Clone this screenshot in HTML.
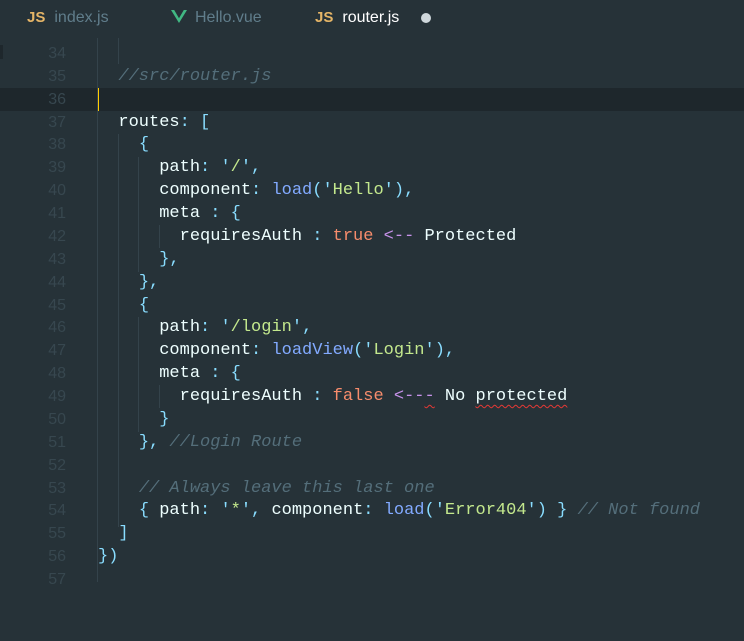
<!DOCTYPE html>
<html><head><meta charset="utf-8"><style>
html,body{margin:0;padding:0}
body{width:744px;height:641px;background:#263238;position:relative;overflow:hidden;font-family:"Liberation Mono",monospace;font-size:17px}
.tabs{position:absolute;left:0;top:0;width:744px;height:36px;background:#263238;font-family:"Liberation Sans",sans-serif;font-size:16px}
.tab{position:absolute;top:9px;color:#607d8b}
.js{color:#e5b567;font-weight:bold;margin-right:9px;font-size:15px}
.ln{position:absolute;left:0;width:66px;text-align:right;color:#37474f;font-family:"Liberation Sans",sans-serif;font-size:16px}
.l{position:absolute;left:98px;white-space:pre;color:#eeffff}
.g{position:absolute;width:1px;background:#34434b}
.p{color:#89ddff}.s{color:#c3e88d}.f{color:#82aaff}.b{color:#f78c6c}.o{color:#c792ea}.c{color:#546e7a;font-style:italic}
.sq{text-decoration:underline wavy #e53935;text-underline-offset:4px;text-decoration-thickness:1px}
</style></head><body>
<div class="tabs">
<div class="tab" style="left:27px"><span class="js">JS</span>index.js</div>
<div class="tab" style="left:171px"><svg width="16" height="13" viewBox="0 0 16 13" style="vertical-align:-1px;margin-right:8px"><path d="M0 0h3.2L8 8.3 12.8 0H16L8 13z" fill="#41b883"/></svg>Hello.vue</div>
<div class="tab" style="left:315px;color:#fff"><span class="js">JS</span>router.js</div>
<div style="position:absolute;left:421px;top:13px;width:10px;height:10px;border-radius:50%;background:#cfd8dc"></div>
</div>
<div style="position:absolute;left:0;top:45px;width:3px;height:14px;background:#1e272c"></div>
<div style="position:absolute;left:0;top:88px;width:744px;height:23px;background:#1e272c"></div>
<div style="position:absolute;left:97px;top:88px;width:2px;height:23px;background:#ffcc00"></div>
<div class="g" style="left:97px;top:38px;height:544px"></div>
<div class="g" style="left:118px;top:38px;height:26px"></div>
<div class="g" style="left:118px;top:134px;height:393px"></div>
<div class="g" style="left:138px;top:157px;height:115px"></div>
<div class="g" style="left:138px;top:317px;height:115px"></div>
<div class="g" style="left:159px;top:225px;height:23px"></div>
<div class="g" style="left:159px;top:385px;height:23px"></div>
<div id="code"></div>
<script>
var L=[
"",
"  <span class=c>//src/router.js</span>",
"",
"  routes<span class=p>:</span> <span class=p>[</span>",
"    <span class=p>{</span>",
"      path<span class=p>:</span> <span class=p>'</span><span class=s>/</span><span class=p>'</span><span class=p>,</span>",
"      component<span class=p>:</span> <span class=f>load</span><span class=p>(</span><span class=p>'</span><span class=s>Hello</span><span class=p>'</span><span class=p>),</span>",
"      meta <span class=p>:</span> <span class=p>{</span>",
"        requiresAuth <span class=p>:</span> <span class=b>true</span> <span class=o>&lt;--</span> Protected",
"      <span class=p>},</span>",
"    <span class=p>},</span>",
"    <span class=p>{</span>",
"      path<span class=p>:</span> <span class=p>'</span><span class=s>/login</span><span class=p>'</span><span class=p>,</span>",
"      component<span class=p>:</span> <span class=f>loadView</span><span class=p>(</span><span class=p>'</span><span class=s>Login</span><span class=p>'</span><span class=p>),</span>",
"      meta <span class=p>:</span> <span class=p>{</span>",
"        requiresAuth <span class=p>:</span> <span class=b>false</span> <span class=o>&lt;--<span class=sq>-</span></span> No <span class=sq>protected</span>",
"      <span class=p>}</span>",
"    <span class=p>},</span> <span class=c>//Login Route</span>",
"",
"    <span class=c>// Always leave this last one</span>",
"    <span class=p>{</span> path<span class=p>:</span> <span class=p>'</span><span class=s>*</span><span class=p>'</span><span class=p>,</span> component<span class=p>:</span> <span class=f>load</span><span class=p>(</span><span class=p>'</span><span class=s>Error404</span><span class=p>'</span><span class=p>)</span> <span class=p>}</span> <span class=c>// Not found</span>",
"  <span class=p>]</span>",
"<span class=p>})</span>",
""];
var h="";
for(var i=0;i<L.length;i++){var t=44+i*22.87;
h+='<div class="ln" style="top:'+(t+1)+'px">'+(34+i)+'</div><div class="l" style="top:'+t+'px">'+L[i]+'</div>';}
document.getElementById("code").innerHTML=h;
</script>
</body></html>
